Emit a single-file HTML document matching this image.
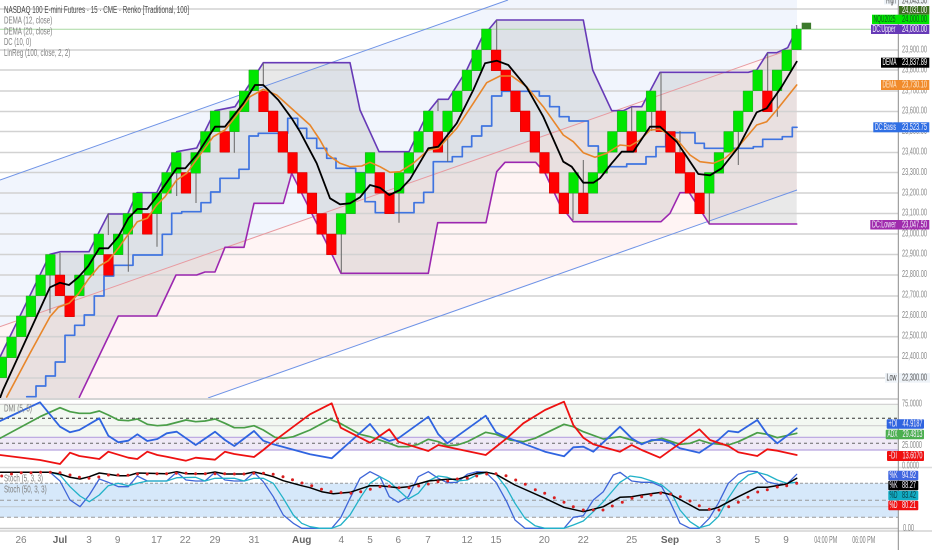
<!DOCTYPE html>
<html>
<head>
<meta charset="utf-8">
<title>NASDAQ 100 E-mini Futures Renko</title>
<style>
html,body{margin:0;padding:0;background:#fff;width:932px;height:550px;overflow:hidden}
svg{display:block;filter:blur(.35px)}
text{font-family:"Liberation Sans Narrow","Liberation Sans",sans-serif;font-size:10px;dominant-baseline:central}
.l{fill:#808080}
.p{fill:#888;font-size:10px}
.w{fill:#f4f0fa;font-size:10px}
.t{fill:#808080;text-anchor:middle;font-size:10px}
.b{fill:#666;text-anchor:middle;font-size:10px;font-weight:700}
.ln{fill:none;stroke-linejoin:round;stroke-linecap:round}
</style>
</head>
<body>
<svg width="932" height="550" viewBox="0 0 932 550" xmlns="http://www.w3.org/2000/svg">
<rect width="932" height="550" fill="#fff"/>
<defs><clipPath id="m"><rect x="0" y="0" width="898" height="398"/></clipPath></defs>

<g clip-path="url(#m)">
<!-- regression channel fills -->
<path d="M0 180L508 0H797V47L0 326.7Z" fill="#f1f5fd"/>
<path d="M0 326.7L797 47V190L208 398H0Z" fill="#fff4f4"/>
<!-- donchian band -->
<path d="M0 357L50 254.3L60.7 251.7H89L108.3 214H127.7L137 192.7H156.7L176.7 151.7L196.7 148L215 110.7L235 106.7L263.3 62.7H350L360 110L379 151.7H409L428.3 111.7L438.3 99.3H448.3L466.7 70L481.7 38L496.7 20H583.3L592.7 70L610 108L611.7 110.7H623.3L631.7 106.7H641.7L660 72.3H748.3L756.7 70L767.7 52.7H776.7L787.7 47.7L796.7 29V224H709.3L689.3 192.7H680L670 213.3L661 221.7H573.3L560 205L545 173L535.7 162.3H505L496.7 171.7L486 222.7H437.7L428.3 273.3H341L325 240L301.7 193.3L291.7 173.3L283.3 203.3H254L244 247.3H225L215 272H205L196.7 275H176L156.7 316H118.3L79.3 397.3L60 440H0Z" fill="rgba(136,136,136,.19)"/>
<!-- grid -->
<g stroke="#d2d2d2" stroke-width="1.6">
<path d="M0 9H898M0 50H898M0 70H898M0 91H898M0 111.5H898M0 131.5H898M0 152.5H898M0 172.5H898M0 193H898M0 213.5H898M0 234H898M0 254.5H898M0 275H898M0 296H898M0 316H898M0 336.7H898M0 357H898M0 378H898"/>
</g>
<path d="M0 29.3H872" stroke="#a9d9a2" stroke-width="1"/>
<!-- regression lines -->
<path d="M0 180L508 0" stroke="#6f93e6" stroke-width="1" fill="none"/>
<path d="M0 326.7L797 47" stroke="#e89aa0" stroke-width="1" fill="none"/>
<path d="M208 398L797 190" stroke="#6f93e6" stroke-width="1" fill="none"/>
<!-- DC lines -->
<path class="ln" stroke="#673ab7" stroke-width="1.6" d="M0 357L50 254.3L60.7 251.7H89L108.3 214H127.7L137 192.7H156.7L176.7 151.7L196.7 148L215 110.7L235 106.7L263.3 62.7H350L360 110L379 151.7H409L428.3 111.7L438.3 99.3H448.3L466.7 70L481.7 38L496.7 20H583.3L592.7 70L611.7 110.7H623.3L631.7 106.7H641.7L660 72.3H748.3L756.7 70L767.7 52.7H776.7L787.7 47.7L796.7 29"/>
<path class="ln" stroke="#9c27b0" stroke-width="1.6" d="M79.3 397.3L118.3 316H156.7L176 275H196.7L205 272H215L225 247.3H244L254 203.3H283.3L291.7 173.3L301.7 193.3L325 240L341 273.3H428.3L437.7 222.7H486L496.7 171.7L505 162.3H535.7L545 173L560 205L573.3 221.7H661L670 213.3L680 192.7H689.3L709.3 224H796.7"/>
<path class="ln" stroke="#3f74e0" stroke-width="1.7" d="M26.7 396.7H36V386H45.7V376H55.3V362H65V335.3H74.7V325.3H84.3V315H94.3V296H104V276H113.7V265.3H133V255H162.3V234.3H171.7V213.3H181.7V211.7H201V202.7H210.7V192H220V178.3H239V169.3H249V136H258.3V133.3H287.7V118.3H297.7V128.3H306.7V138.3H316.7V148.3H326.7V158.3H336V168.3H355.7V172.7H365V201.7H375.3V212.7H414V202.7H423.7V192.3H433.3V161.7H452.3V156.7H462.3V146.7H471.7V136H481.7V126H491.7V96H501.7V91.3H539.3V96H549.7V106.7H559.3V116.7H569V121H588.3V146H598.3V166.7H626.7V164H646V156.7H656V146.7H665.7V132.7H695V143.3H704.3V148.3H753.3V146.7H762.7V139.3H782.3V136.7H792.3V127.3H797"/>
<!-- wicks -->
<path stroke="#666" stroke-width="1" fill="none" d="M50 275V313.3M60 253V275M108.3 213.3V235M128.3 234V271.7M157 213V246.7M176.7 172V196M196 172V203M234.3 111.7V152.7M263.3 62.7V85M341.3 234V273M399 193V222.7M438 100V111M447.7 131V161.7M496.7 20V50M573 193V220M583.3 160V193M631.7 106.7V131M651.7 111V131M661 72.3V111M680 131V152M709.3 193.3V224M738.3 131V165M767.7 52.7V91M777.3 91V116.7M796.7 25V30"/>
<!-- bricks -->
<path fill="#00e600" stroke="#2a9a2a" stroke-width=".5" d="M-3 357h9.7v20.7h-9.7zM6.7 337h9.7v20.7h-9.7zM16.4 316h9.7v20.7h-9.7zM26.1 296h9.7v20.7h-9.7zM35.8 275h9.7v20.7h-9.7zM45.5 254.5h9.7v20.7h-9.7zM74.5 275h9.7v20.7h-9.7zM84.2 254.5h9.7v20.7h-9.7zM93.9 234h9.7v20.7h-9.7zM113.3 234h9.7v20.7h-9.7zM123 213.5h9.7v20.7h-9.7zM132.7 193h9.7v20.7h-9.7zM152 193h9.7v20.7h-9.7zM161.7 172.5h9.7v20.7h-9.7zM171.4 152.5h9.7v20.7h-9.7zM190.8 152.5h9.7v20.7h-9.7zM200.5 131.5h9.7v20.7h-9.7zM210.2 111h9.7v20.7h-9.7zM229.6 111h9.7v20.7h-9.7zM239.3 91h9.7v20.7h-9.7zM248.9 70h9.7v20.7h-9.7zM336.2 213.5h9.7v20.7h-9.7zM345.8 193h9.7v20.7h-9.7zM355.5 172.5h9.7v20.7h-9.7zM365.2 152.5h9.7v20.7h-9.7zM394.3 172.5h9.7v20.7h-9.7zM404 152.5h9.7v20.7h-9.7zM413.7 131.5h9.7v20.7h-9.7zM423.4 111h9.7v20.7h-9.7zM442.7 111h9.7v20.7h-9.7zM452.4 91h9.7v20.7h-9.7zM462.1 70h9.7v20.7h-9.7zM471.8 50h9.7v20.7h-9.7zM481.5 29h9.7v20.7h-9.7zM568.7 172.5h9.7v20.7h-9.7zM588.1 172.5h9.7v20.7h-9.7zM597.8 152.5h9.7v20.7h-9.7zM607.5 131.5h9.7v20.7h-9.7zM617.2 111h9.7v20.7h-9.7zM636.5 111h9.7v20.7h-9.7zM646.2 91h9.7v20.7h-9.7zM704.4 172.5h9.7v20.7h-9.7zM714.1 152.5h9.7v20.7h-9.7zM723.8 131.5h9.7v20.7h-9.7zM733.4 111h9.7v20.7h-9.7zM743.1 91h9.7v20.7h-9.7zM752.8 70h9.7v20.7h-9.7zM772.2 70h9.7v20.7h-9.7zM781.9 50h9.7v20.7h-9.7zM791.6 29h9.7v20.7h-9.7z"/>
<path fill="#ff0000" stroke="#c80000" stroke-width=".5" d="M55.1 275h9.7v20.7h-9.7zM64.8 296h9.7v20.7h-9.7zM103.6 254.5h9.7v20.7h-9.7zM142.4 213.5h9.7v20.7h-9.7zM181.1 172.5h9.7v20.7h-9.7zM219.9 131.5h9.7v20.7h-9.7zM258.6 91h9.7v20.7h-9.7zM268.3 111h9.7v20.7h-9.7zM278 131.5h9.7v20.7h-9.7zM287.7 152.5h9.7v20.7h-9.7zM297.4 172.5h9.7v20.7h-9.7zM307.1 193h9.7v20.7h-9.7zM316.8 213.5h9.7v20.7h-9.7zM326.5 234h9.7v20.7h-9.7zM374.9 172.5h9.7v20.7h-9.7zM384.6 193h9.7v20.7h-9.7zM433.1 131.5h9.7v20.7h-9.7zM491.2 50h9.7v20.7h-9.7zM500.9 70h9.7v20.7h-9.7zM510.6 91h9.7v20.7h-9.7zM520.3 111h9.7v20.7h-9.7zM530 131.5h9.7v20.7h-9.7zM539.6 152.5h9.7v20.7h-9.7zM549.3 172.5h9.7v20.7h-9.7zM559 193h9.7v20.7h-9.7zM578.4 193h9.7v20.7h-9.7zM626.9 131.5h9.7v20.7h-9.7zM655.9 111h9.7v20.7h-9.7zM665.6 131.5h9.7v20.7h-9.7zM675.3 152.5h9.7v20.7h-9.7zM685 172.5h9.7v20.7h-9.7zM694.7 193h9.7v20.7h-9.7zM762.5 91h9.7v20.7h-9.7z"/>
<rect x="801.7" y="22.7" width="9.4" height="6.4" fill="#3c7a2c"/>
<!-- DEMA 20 -->
<path class="ln" stroke="#e8862a" stroke-width="1.6" d="M6.7 397L30 353.3L50 316.7L58.3 307.3L69 303.3L78.3 294L88.3 279.3L99.3 266L108.3 260.7L118.3 248.3L128.3 234.3L137.3 221.7L147.3 218.3L156.7 205L165 196.7L176.7 180L186.7 173.3L196.7 159.3L213.3 136.7L225 130L236.7 115L250 96.7L263.3 89.3L276.7 95L293.3 110L310 125L320 140L328.3 155L340 163.3L350 166.7L361.7 166L370 162.3L380 166.7L390 172.3L400 171.7L413.3 163.3L428.3 150L438.3 148.3L456.7 128.3L473.3 103.3L486.7 82.7L500 76H511.7L526.7 86.7L543.3 106.7L563.3 135L573.3 141.7L583.3 152.7L595 157.3L606.7 153.3L620 145L630 146L640 140L650 130L660 129.3L676.7 139.3L690 155L700 161.7L713.3 163.3L725 158.3L738.3 146.7L756.7 125L766.7 121.7L776.7 110L796.7 85"/>
<!-- DEMA 12 -->
<path class="ln" stroke="#000" stroke-width="1.8" d="M0 398L3 390L50 287.3L60 282.7L69 285L78.3 277.3L88.3 266L99.3 248.3H108.3L118.3 236.7L128.3 218.3L137.3 209H147.3L156.7 196.7L176.7 168.3H185.3L196.7 155L215 126.7H225L243.3 103.3L255 85H263.3L278.3 100L291.7 118.3L300 131.7L316.7 163.3L330 198.3L340 204.3L350 203.3L360 197.3L370 185L380 187.7L389.3 195L400 190L410 179.3L428.3 148.3L438.3 146.7L456.7 123.3L473.3 90L485 63.3L496.7 60.7L508.3 65L526.7 87.3L543.3 116.7L563.3 161.7L571.7 166.7L583.3 182.7H593.3L600 178.3L611.7 163.3L621.7 151.7H633.3L650 126.7H660L676.7 141.7L698.3 174L710 175.3L721.7 168.3L738.3 147.3L756.7 112.3L766.7 108.3L781.7 86.7L796.7 61.7"/>
</g>

<!-- legend -->
<text x="4" y="10.3" fill="#4a4a4a" textLength="185" lengthAdjust="spacingAndGlyphs">NASDAQ 100 E-mini Futures · 15 · CME · Renko [Traditional, 100]</text>
<text class="l" x="4" y="21" textLength="48.3" lengthAdjust="spacingAndGlyphs">DEMA (12, close)</text>
<text class="l" x="4" y="32" textLength="48.3" lengthAdjust="spacingAndGlyphs">DEMA (20, close)</text>
<text class="l" x="4" y="42.7" textLength="27.3" lengthAdjust="spacingAndGlyphs">DC (10, 0)</text>
<text class="l" x="4" y="53.3" textLength="66.3" lengthAdjust="spacingAndGlyphs">LinReg (100, close, 2, 2)</text>

<!-- DMI pane -->
<rect x="0" y="404.3" width="898" height="33" fill="#f3f8f2"/>
<rect x="0" y="437.3" width="898" height="12.7" fill="#efe9f6"/>
<path d="M0 399H898" stroke="#d4d4d4" stroke-width="2"/>
<path d="M0 404.3H898M0 425.7H898" stroke="#cfcfcf" stroke-width="1.2"/>
<path d="M0 437.3H898M0 450H898" stroke="#b8a4df" stroke-width="1.2"/>
<path d="M0 418.3H898" stroke="#333" stroke-width="1" stroke-dasharray="3 3"/>
<path d="M0 443.3H898" stroke="#666" stroke-width="1" stroke-dasharray="3 3"/>
<path class="ln" stroke="#4a9e48" stroke-width="1.7" d="M0 438.3L40 416.7L60 407.7L70 411.7L79.3 413.3H90L99.3 411L108.3 415L118.3 420L128.3 420.7L137.3 419L147.3 424.3L157.3 425.7L166.7 425L186 420L195.7 421.7L205 421L215 419L225 423.3L234.3 427.7H244.3L254 425.7L263.3 430L275 437.3L283.3 438.3L293.3 436.7L310 430L330 419.3L340 423.3L360 434.3L370 436.7L389.3 443.3L398.3 446.7H408.3L418.3 444.3L428.3 439.3L438.3 441.7L447.3 445.7L457.3 445L467.3 441.7L485.7 432.3L496 434.3L510 440L523.3 441.7L535 438.3L564 424.3L573.3 426.7L583.3 431.7L603.3 439L620 436.7L631.7 440L641.7 443.3L661.7 438.3L680 444.3L690 443.3L699.3 440L710 443.3L728.3 445L738.3 441.7L757.3 432.7L767.3 434.3L777.3 437.7L796.7 433.3"/>
<path class="ln" stroke="#2f64e0" stroke-width="1.8" d="M0 421L40 402.3L60 426.7L70 432.3L79.3 430L99.3 418.3L108.3 435.7L118.3 442.3L128.3 440.7L137.3 434.3L147.3 441L157.3 439L166.7 433.3L176.7 431.7L195.7 445L215 431.7L225 440L234.3 446L254 431L263.3 440.7L273.3 444.3L310 454.3L331.7 458.3L370 424L380 436.7L389.3 441L398.3 438.3L428.3 416.7L438.3 434.3L447.3 443.3L485.7 415.7L496 432.3L506.7 437.3L545 451.7L564 456.3L573.3 447.3L583.3 446.7L593.3 451.7L620 426.7L631.7 438.3L641.7 444.3L651.7 440H661.7L671.7 443.3L680 448.3L699.3 452.7L718.3 440L728.3 431L738.3 432.3L757.3 420L767.3 434.3L777.3 443.3L796.7 428.3"/>
<path class="ln" stroke="#ee1111" stroke-width="1.8" d="M0 455L40 460L60 464L70 452.7L79.3 456L99.3 459L108.3 451.7L128.3 457.7L137.3 459L147.3 451.7L157.3 455L166.7 456.7L186 460.7L195.7 457.7L215 459.7L225 451.7L234.3 454L254 457L263.3 450L273.3 441.7L293.3 426.7L310 414.3L331.7 403.3L340.7 427.7L370 442.7L389.3 429.3L398.3 441.7L428.3 451L438.3 445L485.7 455L506.7 438.3L523.3 423.3L545 410L564 401.7L573.3 425L583.3 437.7L593.3 444.3L620 451.7L631.7 445L641.7 450L660 457.7L680 443.3L699.3 429.3L710 440L728.3 446L738.3 452.3L757.3 456L767.3 449.3L777.3 450.7L796.7 455"/>
<text class="l" x="4" y="409" textLength="28" lengthAdjust="spacingAndGlyphs">DMI (5, 5)</text>

<!-- Stoch pane -->
<path d="M0 467.5H932" stroke="#dcdcdc" stroke-width="1.6"/>
<rect x="0" y="483.3" width="898" height="34" fill="#d6e8fa"/>
<path d="M0 483.3H898" stroke="#999" stroke-width="1" stroke-dasharray="3 2"/>
<path d="M0 500.3H898M0 517.3H898" stroke="#999" stroke-width="1" stroke-dasharray="4 3"/>
<path d="M0 506.7H898" stroke="#c4ccd4" stroke-width="1.2"/>
<path d="M0 528.5H898" stroke="#c8c8c8" stroke-width="1.4"/>
<path class="ln" stroke="#3f66d8" stroke-width="1.3" d="M0 472.3H50L60 481L70 500L80 506.7L89.3 495L99.3 479L108.3 482.3L118.3 486.7H128.3L137.3 476L147.3 481H166.7L176.7 472.3L186 480L195.7 481H205L215 472.3L225 480L234.3 481H244.3L254 472.3L263.3 481.7L273.3 496.7L283.3 515L293.3 523.3L301.7 528.3H331.7L340.7 517.7L350 498.3L360 478.3L370 471.7L380 476.7L389.3 496.7L398.3 502.3L408.3 496.7L418.3 476.7L428.3 471.7L438.3 478.3L447.3 482.7L457.3 482.3L467.3 474.3L476.7 471.7L485.7 472.3L496 482.3L506.7 501.7L515 520L525 528.3H564L573.3 517.3L583.3 515.7L593.3 500L603.3 491.7L613.3 475L620 472.3L631.7 481L641.7 482.3H651.7L661.7 486.7L670 501.7L680 523.3L690 528.3H699.3L709.3 518.3L718.3 503.3L728.3 483.3L738.3 474.3L748.3 471L757.3 471.7L767.3 481.7L777.3 484.3H786.7L796.7 474.3"/>
<path class="ln" stroke="#22b2c8" stroke-width="1.3" d="M0 472.3H50L60 475L70 486.7L80 496L89.3 501.7L99.3 495L108.3 485.7L118.3 483.3L128.3 485.7L137.3 483.3L147.3 481H166.7L176.7 477.7L195.7 477.3L205 481L215 478.3H234.3L244.3 481L254 478.3H263.3L273.3 483.3L283.3 498.3L293.3 515L301.7 523.3L310 526.7L320 528.3H331.7L340.7 525L350 515L360 498.3L370 483.3L380 476.7L389.3 481.7L398.3 490L408.3 499L418.3 493.3L428.3 481L438.3 476L447.3 477.3L457.3 481L467.3 480L476.7 475L486.7 472.3L496 474.3L506.7 488.3L515 503.3L525 518.3L535 525.7L545 528.3H564L573.3 525L583.3 521L593.3 511.7L603.3 501.7L613.3 490L620 482.3L630 476L641.7 477.7L651.7 481L661.7 485L671.7 493.3L680 510L690 521.7L699.3 527.7L709.3 525L718.3 516.7L728.3 498.3L738.3 483.3L748.3 475L757.3 472.3L767.3 475L777.3 480L786.7 483.3L796.7 482.3"/>
<path class="ln" stroke="#000" stroke-width="1.5" d="M0 472.3H50L60 474L70 477.3L80 479L89.3 476.7L99.3 473L108.3 474.3L118.3 475.7H128.3L137.3 473L166.7 473.7L176.7 471.7L186 473.7H205L215 472L225 474H244.3L254 472L263.3 474L273.3 476.7L283.3 480.7L301.7 485.7L310 487.7L321.7 491.7L333.3 493.7L350 492.3L370 485.7H380L398.3 487.7L408.3 486.7L428.3 481L447.3 479.3H457.3L476.7 473.3L486.7 472.3L496 474.3L515 485L545 498.3L564 507.3L583.3 511.7L603.3 506.7L620 497.3L631.7 496.7L641.7 495L661.7 492.3L671.7 495L699.3 510H709.3L718.3 507.3L738.3 496.7L757.3 487.3H767.3L786.7 484L796.7 478.3"/>
<path class="ln" stroke="#d82020" stroke-width="3" d="M1.7 476h0M11.5 474h0M21.2 472.7h0M31 472.7h0M40.6 472.3h0M50.3 472.3h0M60 472.7h0M70 475h0M79.4 477.3h0M89 478.3h0M98.8 477h0M108.4 475h0M118 475h0M128 475.3h0M137.5 474h0M147.2 474h0M157 473.7h0M166.6 473.7h0M176.3 473.3h0M186 473.3h0M195.6 473.7h0M205.3 473.7h0M215 473.7h0M224.7 473.7h0M234.4 474h0M244 474h0M253.8 473.3h0M263.5 473.3h0M273.2 474.3h0M283 476.7h0M292.5 479.7h0M302 483h0M311.7 485.7h0M321.5 489.3h0M331 491.7h0M341 492.7h0M351 493.3h0M360.7 491.7h0M370.3 489.3h0M380 486.7h0M389.3 486.3h0M399 487.7h0M409 487.7h0M418.7 486h0M428.3 484h0M438 481.7h0M447.7 481h0M457.3 479h0M467.3 478.3h0M476.7 476h0M486.7 474h0M496 473.7h0M506 475.7h0M515.7 480h0M525.3 484.3h0M535.3 489.7h0M544.7 493.3h0M554.3 497.7h0M564 502.3h0M573.3 506.7h0M583.3 510h0M593.3 510h0M603 510h0M612.3 506h0M622.3 502.3h0M632 498.3h0M641.7 496.7h0M651 495h0M660.7 493.3h0M670.7 494h0M680.3 496.7h0M690 501h0M699.3 505.7h0M709.3 509.3h0M719 510h0M728.7 506.7h0M738.3 502.3h0M748 497.3h0M757.7 492h0M767.3 489.7h0M777.3 487h0M786.7 485.7h0M796.7 483.3h0"/>
<text class="l" x="4" y="479" textLength="39" lengthAdjust="spacingAndGlyphs">Stoch (5, 3, 3)</text>
<text class="l" x="4" y="490" textLength="42.7" lengthAdjust="spacingAndGlyphs">Stoch (50, 3, 3)</text>

<!-- bottom axis -->
<path d="M0 531H932" stroke="#bdbdbd" stroke-width="1"/>
<path d="M898.3 0V550" stroke="#8a8a8a" stroke-width="1"/>
<g>
<text class="t" x="21" y="540.7">26</text>
<text class="b" x="60" y="540.7">Jul</text>
<text class="t" x="89" y="540.7">3</text>
<text class="t" x="117.7" y="540.7">9</text>
<text class="t" x="156.7" y="540.7">17</text>
<text class="t" x="185.3" y="540.7">22</text>
<text class="t" x="215" y="540.7">29</text>
<text class="t" x="254" y="540.7">31</text>
<text class="b" x="301.7" y="540.7">Aug</text>
<text class="t" x="341.3" y="540.7">4</text>
<text class="t" x="370" y="540.7">5</text>
<text class="t" x="398.3" y="540.7">6</text>
<text class="t" x="428" y="540.7">7</text>
<text class="t" x="467" y="540.7">12</text>
<text class="t" x="496" y="540.7">15</text>
<text class="t" x="544.3" y="540.7">20</text>
<text class="t" x="583.3" y="540.7">22</text>
<text class="t" x="631.7" y="540.7">25</text>
<text class="b" x="670" y="540.7">Sep</text>
<text class="t" x="718.3" y="540.7">3</text>
<text class="t" x="757.3" y="540.7">5</text>
<text class="t" x="786" y="540.7">9</text>
<text class="t" x="825.7" y="540.7" textLength="23" lengthAdjust="spacingAndGlyphs">04:00 PM</text>
<text class="t" x="863.7" y="540.7" textLength="23" lengthAdjust="spacingAndGlyphs">06:00 PM</text>
</g>

<!-- price axis labels -->
<g>
<text class="p" x="902" y="50" textLength="25" lengthAdjust="spacingAndGlyphs">23,900.00</text>
<text class="p" x="902" y="70" textLength="25" lengthAdjust="spacingAndGlyphs">23,800.00</text>
<text class="p" x="902" y="91" textLength="25" lengthAdjust="spacingAndGlyphs">23,700.00</text>
<text class="p" x="902" y="111" textLength="25" lengthAdjust="spacingAndGlyphs">23,600.00</text>
<text class="p" x="902" y="131.5" textLength="25" lengthAdjust="spacingAndGlyphs">23,500.00</text>
<text class="p" x="902" y="152" textLength="25" lengthAdjust="spacingAndGlyphs">23,400.00</text>
<text class="p" x="902" y="172.5" textLength="25" lengthAdjust="spacingAndGlyphs">23,300.00</text>
<text class="p" x="902" y="193" textLength="25" lengthAdjust="spacingAndGlyphs">23,200.00</text>
<text class="p" x="902" y="213" textLength="25" lengthAdjust="spacingAndGlyphs">23,100.00</text>
<text class="p" x="902" y="234" textLength="25" lengthAdjust="spacingAndGlyphs">23,000.00</text>
<text class="p" x="902" y="254" textLength="25" lengthAdjust="spacingAndGlyphs">22,900.00</text>
<text class="p" x="902" y="274.5" textLength="25" lengthAdjust="spacingAndGlyphs">22,800.00</text>
<text class="p" x="902" y="295" textLength="25" lengthAdjust="spacingAndGlyphs">22,700.00</text>
<text class="p" x="902" y="315.5" textLength="25" lengthAdjust="spacingAndGlyphs">22,600.00</text>
<text class="p" x="902" y="336" textLength="25" lengthAdjust="spacingAndGlyphs">22,500.00</text>
<text class="p" x="902" y="356.5" textLength="25" lengthAdjust="spacingAndGlyphs">22,400.00</text>
<text class="p" x="902" y="404" textLength="20" lengthAdjust="spacingAndGlyphs">75.0000</text>
<text class="p" x="902" y="445.7" textLength="20" lengthAdjust="spacingAndGlyphs">25.0000</text>
<text class="p" x="902" y="466" textLength="17" lengthAdjust="spacingAndGlyphs">0.0000</text>
<text class="p" x="903" y="528.3" textLength="11" lengthAdjust="spacingAndGlyphs">0.00</text>
</g>

<!-- tags -->
<rect x="884" y="0" width="14" height="4.5" fill="#eef3f8"/>
<text x="886" y="1" fill="#555" textLength="10" lengthAdjust="spacingAndGlyphs">High</text>
<rect x="899" y="0" width="30" height="4.5" fill="#eef3f8"/>
<text x="902" y="1" fill="#555" textLength="25" lengthAdjust="spacingAndGlyphs">24,043.50</text>

<rect x="899" y="6" width="30.3" height="8.7" fill="#3f6f22"/>
<text class="w" x="902" y="10.4" textLength="25" lengthAdjust="spacingAndGlyphs">24,031.00</text>

<rect x="872" y="14.7" width="57.3" height="9.3" fill="#00e600"/>
<text x="873.5" y="19.4" fill="#0c5a1c" textLength="22" lengthAdjust="spacingAndGlyphs">NQU2025</text>
<text x="902" y="19.4" fill="#0c5a1c" textLength="25" lengthAdjust="spacingAndGlyphs">24,000.00</text>

<rect x="871" y="24.7" width="58.3" height="9.3" fill="#673ab7"/>
<text class="w" x="872.5" y="29.4" textLength="23" lengthAdjust="spacingAndGlyphs">DC:Upper</text>
<text class="w" x="902" y="29.4" textLength="25" lengthAdjust="spacingAndGlyphs">24,000.00</text>

<rect x="881" y="57.7" width="48.3" height="10" fill="#000"/>
<text x="882.5" y="62.7" fill="#fff" textLength="14" lengthAdjust="spacingAndGlyphs">DEMA</text>
<text x="902" y="62.7" fill="#fff" textLength="25" lengthAdjust="spacingAndGlyphs">23,837.89</text>

<rect x="881" y="80" width="48.3" height="10" fill="#f18b2b"/>
<text x="882.5" y="85" fill="#fde8d0" textLength="14" lengthAdjust="spacingAndGlyphs">DEMA</text>
<text x="902" y="85" fill="#fde8d0" textLength="25" lengthAdjust="spacingAndGlyphs">23,730.10</text>

<rect x="873.3" y="122.3" width="56" height="10" fill="#2f6fe4"/>
<text class="w" x="875" y="127.3" textLength="21" lengthAdjust="spacingAndGlyphs">DC:Basis</text>
<text class="w" x="902" y="127.3" textLength="25" lengthAdjust="spacingAndGlyphs">23,523.75</text>

<rect x="870.3" y="220" width="59" height="9.5" fill="#a02bad"/>
<text class="w" x="872" y="224.8" textLength="24" lengthAdjust="spacingAndGlyphs">DC:Lower</text>
<text class="w" x="902" y="224.8" textLength="25" lengthAdjust="spacingAndGlyphs">23,047.50</text>

<rect x="885" y="373" width="13" height="9.7" fill="#eef3f8"/>
<text x="886.5" y="378" fill="#444" textLength="10" lengthAdjust="spacingAndGlyphs">Low</text>
<rect x="899" y="373" width="31" height="9.7" fill="#eef3f8"/>
<text x="902" y="378" fill="#555" textLength="25" lengthAdjust="spacingAndGlyphs">22,300.00</text>

<rect x="886.7" y="419.3" width="37.3" height="9.4" rx="1" fill="#2f64e0"/>
<text class="w" x="888.5" y="424" textLength="9" lengthAdjust="spacingAndGlyphs">+DI</text>
<text class="w" x="902.5" y="424" textLength="20" lengthAdjust="spacingAndGlyphs">44.9187</text>
<rect x="885.7" y="429.7" width="38.3" height="9.6" rx="1" fill="#4caf50"/>
<text class="w" x="887.5" y="434.5" textLength="10" lengthAdjust="spacingAndGlyphs">ADX</text>
<text class="w" x="902.5" y="434.5" textLength="20" lengthAdjust="spacingAndGlyphs">29.4813</text>
<rect x="887" y="451" width="37" height="10" rx="1" fill="#f01010"/>
<text class="w" x="889" y="456" textLength="8" lengthAdjust="spacingAndGlyphs">-DI</text>
<text class="w" x="902.5" y="456" textLength="20" lengthAdjust="spacingAndGlyphs">13.6070</text>

<rect x="888.3" y="470.7" width="30" height="9.5" rx="1" fill="#3f66e0"/>
<text class="w" x="889.5" y="475.4" textLength="8" lengthAdjust="spacingAndGlyphs">%K</text>
<text class="w" x="902" y="475.4" textLength="14" lengthAdjust="spacingAndGlyphs">94.92</text>
<rect x="888.3" y="480.7" width="30" height="9.5" rx="1" fill="#000"/>
<text class="w" x="889.5" y="485.4" textLength="8" lengthAdjust="spacingAndGlyphs">%K</text>
<text class="w" x="902" y="485.4" textLength="14" lengthAdjust="spacingAndGlyphs">88.27</text>
<rect x="888.3" y="490.7" width="30" height="9.5" rx="1" fill="#12acc4"/>
<text x="889.5" y="495.4" fill="#0a3f48" textLength="8" lengthAdjust="spacingAndGlyphs">%D</text>
<text x="902" y="495.4" fill="#0a3f48" textLength="14" lengthAdjust="spacingAndGlyphs">83.42</text>
<rect x="888.3" y="500.7" width="30" height="9.5" rx="1" fill="#f01010"/>
<text class="w" x="889.5" y="505.4" textLength="8" lengthAdjust="spacingAndGlyphs">%D</text>
<text class="w" x="902" y="505.4" textLength="14" lengthAdjust="spacingAndGlyphs">80.21</text>
</svg>
</body>
</html>
